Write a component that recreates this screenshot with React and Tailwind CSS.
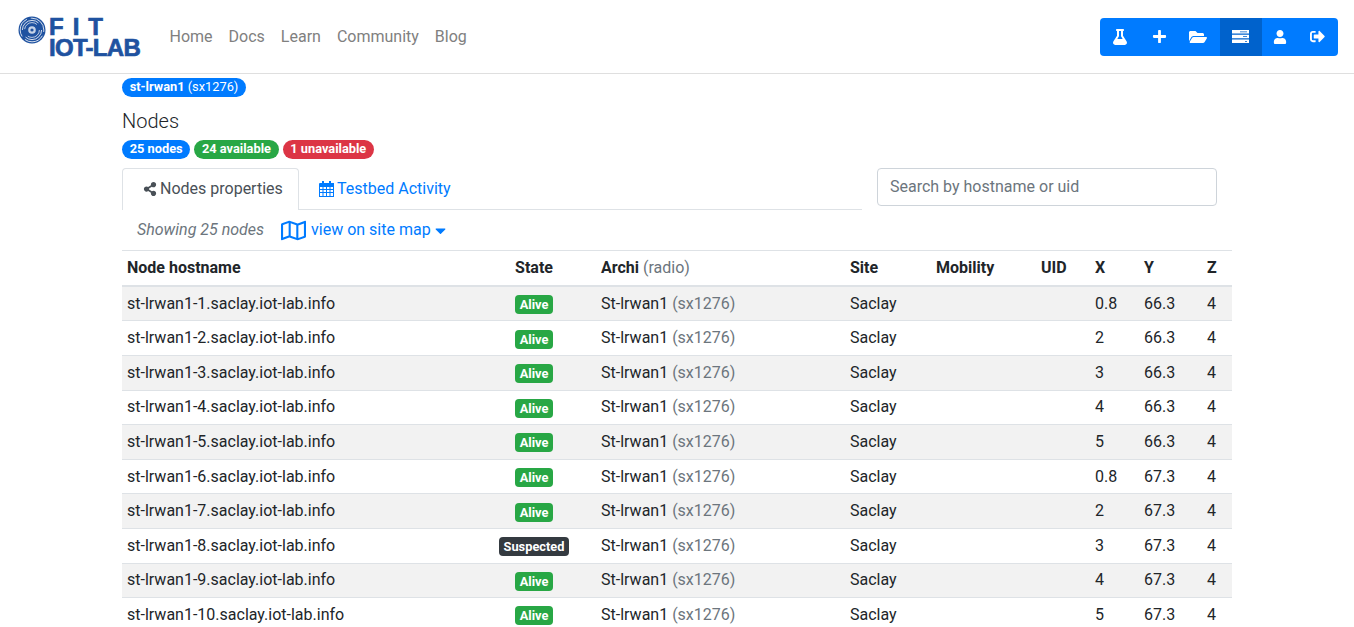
import { FaFlask, FaPlus, FaFolderOpen, FaUser, FaShareAlt, FaRegMap, FaCaretDown, FaSignOutAlt } from "react-icons/fa";

const xs = ["0.8", "2", "3", "4", "5"];
const ys = ["66.3", "67.3"];

const nodes = Array.from({ length: 10 }, (_, i) => ({
  host: `st-lrwan1-${i + 1}.saclay.iot-lab.info`,
  state: i === 7 ? "Suspected" : "Alive",
  x: xs[i % 5],
  y: ys[Math.floor(i / 5)],
}));

const links = ["Home", "Docs", "Learn", "Community", "Blog"];

const ServerIcon = () => (
  <svg width="17" height="13" viewBox="0 0 17 13" fill="white">
    <path d="M0 0h17v3.4H0zM0 4.8h17v3.4H0zM0 9.6h17V13H0z" />
    <path d="M8 1.4h7v.8H8zM11 6.2h4v.8h-4zM13 11h2v.8h-2z" fill="#0062cc" />
  </svg>
);

const Disc = () => (
  <svg width="28" height="28" viewBox="0 0 28 28">
    <circle cx="14" cy="14" r="13.5" fill="#1f52a0" />
    <circle cx="14" cy="14" r="11.8" fill="none" stroke="white" strokeWidth="0.8" strokeDasharray="20 4" strokeDashoffset="-6" />
    <circle cx="14" cy="14" r="9.6" fill="none" stroke="white" strokeWidth="0.8" strokeDasharray="22 8" />
    <circle cx="14" cy="14" r="7.4" fill="none" stroke="white" strokeWidth="0.7" strokeDasharray="16 8" />
    <circle cx="14" cy="14" r="3.8" fill="white" opacity="0.75" />
    <circle cx="14" cy="14" r="1.6" fill="#1f52a0" />
  </svg>
);

const CalendarIcon = () => (
  <svg width="15" height="16" viewBox="0 0 15 16" fill="#007bff">
    <path d="M3 0h2v3H3zM10 0h2v3h-2z" />
    <path fillRule="evenodd" d="M1 2h14v14H0V3a1 1 0 0 1 1-1zM1 6v2h2.5V6zM4.5 6v2H7V6zM8 6v2h2.5V6zM11.5 6v2H14V6zM1 9v2h2.5V9zM4.5 9v2H7V9zM8 9v2h2.5V9zM11.5 9v2H14V9zM1 12v3h2.5v-3zM4.5 12v3H7v-3zM8 12v3h2.5v-3zM11.5 12v3H14v-3z" />
  </svg>
);

const Pill = ({ color, children }) => (
  <span className={`inline-block h-[19px] rounded-full px-[7.68px] text-[12.8px] font-bold leading-[18px] text-white ${color}`}>
    {children}
  </span>
);

const Btn = ({ w, active, children }) => (
  <div className={`flex items-center justify-center ${w} ${active ? "bg-[#0062cc]" : ""}`}>{children}</div>
);

export default function App() {
  return (
    <div className="h-[627px] overflow-hidden bg-white text-[#212529] font-['Roboto',sans-serif]">
      <nav className="flex h-[74px] items-center justify-between border-b border-[#dfdfdf] pl-[18px] pr-4">
        <div className="flex items-center">
          <div className="flex h-[42px] w-[136px] items-start">
            <Disc />
            <div className="ml-[3px] flex flex-col font-['Liberation_Sans',sans-serif] text-[24px] font-bold leading-[21px] text-[#1f52a0] [-webkit-text-stroke:0.7px_#1f52a0]">
              <span className="tracking-[9px]">FIT</span>
              <span className="tracking-[-0.7px]">IOT-LAB</span>
            </div>
          </div>
          <div className="ml-[7.5px] flex">
            {links.map((l) => (
              <a key={l} className="px-2 text-base text-[#808080]">{l}</a>
            ))}
          </div>
        </div>
        <div className="flex h-[38px] overflow-hidden rounded bg-[#007bff]">
          <Btn w="w-[40px]"><FaFlask size={16} color="white" /></Btn>
          <Btn w="w-[40px] pr-[2px]"><FaPlus size={15} color="white" /></Btn>
          <Btn w="w-[40px] pr-[4px]"><FaFolderOpen size={18} color="white" /></Btn>
          <Btn w="w-[42px] pr-[2px]" active><ServerIcon /></Btn>
          <Btn w="w-[38px] pr-[3px]"><FaUser size={14} color="white" /></Btn>
          <Btn w="w-[38px] pr-[4px]"><FaSignOutAlt size={15} color="white" /></Btn>
        </div>
      </nav>

      <main className="mx-auto w-[1110px]">
        <div className="mt-1 flex">
          <span className="inline-block h-[19px] rounded-full bg-[#007bff] px-[7.68px] text-[12.8px] leading-[18px] text-white">
            <b>st-lrwan1</b> (sx1276)
          </span>
        </div>
        <h5 className="mt-[12px] h-[24px] text-xl font-light leading-[24px]">Nodes</h5>
        <div className="mt-[7px] flex gap-1">
          <Pill color="bg-[#007bff]">25 nodes</Pill>
          <Pill color="bg-[#28a745]">24 available</Pill>
          <Pill color="bg-[#dc3545]">1 unavailable</Pill>
        </div>

        <div className="mt-[9px] flex items-start">
          <div className="w-[740px]">
            <div className="flex h-[42px] border-b border-[#dee2e6]">
              <div className="flex h-[42px] w-[177px] items-center gap-[3px] rounded-t border border-b-0 border-[#dee2e6] bg-white pb-[2px] pl-5 text-[#495057]">
                <FaShareAlt size={14} />
                <span>Nodes properties</span>
              </div>
              <div className="flex h-[41px] items-center gap-[3px] pl-5 text-[#007bff]">
                <CalendarIcon />
                <span>Testbed Activity</span>
              </div>
            </div>
          </div>
          <div className="ml-[15px] flex h-[38px] w-[340px] items-center rounded border border-[#ced4da] px-3 text-[#6c757d]">
            Search by hostname or uid
          </div>
        </div>

        <div className="flex h-[40px] items-center pl-[15px]">
          <i className="text-[#6c757d]">Showing 25 nodes</i>
          <a className="ml-[17px] flex items-center text-[#007bff]">
            <FaRegMap size={25} />
            <span className="ml-[5px]">view on site map</span>
            <FaCaretDown size={17} className="ml-[1px]" />
          </a>
        </div>

        <table className="w-[1110px] table-fixed border-collapse text-left">
          <colgroup>
            <col className="w-[350px]" />
            <col className="w-[124px]" />
            <col className="w-[249px]" />
            <col className="w-[86px]" />
            <col className="w-[105px]" />
            <col className="w-[54px]" />
            <col className="w-[49px]" />
            <col className="w-[63px]" />
            <col className="w-[30px]" />
          </colgroup>
          <thead>
            <tr className="h-[35.9px] border-t border-b-2 border-[#dee2e6]">
              <th className="px-[5px] font-bold">Node hostname</th>
              <th className="px-[5px] text-center font-bold">State</th>
              <th className="px-[5px] font-bold">Archi <span className="font-normal text-[#6c757d]">(radio)</span></th>
              <th className="px-[5px] font-bold">Site</th>
              <th className="px-[5px] font-bold">Mobility</th>
              <th className="px-[5px] font-bold">UID</th>
              <th className="px-[5px] font-bold">X</th>
              <th className="px-[5px] font-bold">Y</th>
              <th className="px-[5px] font-bold">Z</th>
            </tr>
          </thead>
          <tbody>
            {nodes.map((n, i) => (
              <tr key={n.host} className={`h-[34.6px] border-b border-[#dee2e6] ${i % 2 === 0 ? "bg-[#f2f2f2]" : "bg-white"}`}>
                <td className="px-[5px]">{n.host}</td>
                <td className="px-[5px] text-center">
                  <span className={`inline-block h-[19px] rounded px-[5px] align-middle text-[12.8px] font-bold leading-[19px] text-white ${n.state === "Alive" ? "bg-[#28a745]" : "bg-[#343a40]"}`}>
                    {n.state}
                  </span>
                </td>
                <td className="px-[5px]">St-lrwan1 <span className="text-[#6c757d]">(sx1276)</span></td>
                <td className="px-[5px]">Saclay</td>
                <td className="px-[5px]"></td>
                <td className="px-[5px]"></td>
                <td className="px-[5px]">{n.x}</td>
                <td className="px-[5px]">{n.y}</td>
                <td className="px-[5px]">4</td>
              </tr>
            ))}
          </tbody>
        </table>
      </main>
    </div>
  );
}
